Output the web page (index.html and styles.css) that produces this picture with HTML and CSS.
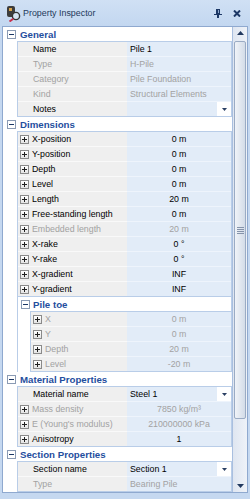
FILE: index.html
```html
<!DOCTYPE html>
<html>
<head>
<meta charset="utf-8">
<link rel="stylesheet" href="styles.css">
</head>
<body>
<div class="titlebar">
  <svg class="app-icon" viewBox="0 0 15 17">
    <rect x="1" y="1" width="8" height="11" rx="2" fill="#3d3d3d"/>
    <rect x="3" y="3" width="3" height="3" fill="#d8a44a"/>
    <circle cx="10" cy="11" r="3.6" fill="#d6e4f2" stroke="#333" stroke-width="1.4"/>
    <line x1="7.3" y1="13.8" x2="3.5" y2="16.5" stroke="#c8304e" stroke-width="2"/>
  </svg>
  <span class="title">Property Inspector</span>
  <svg class="pin" viewBox="0 0 8 9">
    <rect x="2" y="0" width="4" height="5" fill="#1c3765"/>
    <rect x="4" y="1" width="1" height="3" fill="#8fa8cc"/>
    <rect x="0" y="5" width="8" height="1" fill="#1c3765"/>
    <rect x="3" y="6" width="2" height="3" fill="#1c3765"/>
  </svg>
  <svg class="close" viewBox="0 0 8 7">
    <path d="M1 0.5 L7 6.5 M7 0.5 L1 6.5" stroke="#1c3765" stroke-width="2"/>
  </svg>
</div>
<div class="panel">
  <div class="list">
    <div class="cat"><span class="tog"><svg viewBox="0 0 9 9"><rect x="0.5" y="0.5" width="8" height="8" fill="#fff" stroke="#8b9bb4"/><path d="M2 4.5h5" stroke="#1c3765"/></svg></span><span class="cat-label">General</span></div>
    <div class="group">
      <div class="row"><div class="name np">Name</div><div class="val left">Pile 1</div></div>
      <div class="row dis"><div class="name np">Type</div><div class="val left">H-Pile</div></div>
      <div class="row dis"><div class="name np">Category</div><div class="val left">Pile Foundation</div></div>
      <div class="row dis"><div class="name np">Kind</div><div class="val left">Structural Elements</div></div>
      <div class="row last"><div class="name np">Notes</div><div class="val left"><span class="dd"><svg viewBox="0 0 5 3"><path d="M0 0h5L2.5 3z" fill="#2a3f63"/></svg></span></div></div>
    </div>

    <div class="cat"><span class="tog"><svg viewBox="0 0 9 9"><rect x="0.5" y="0.5" width="8" height="8" fill="#fff" stroke="#8b9bb4"/><path d="M2 4.5h5" stroke="#1c3765"/></svg></span><span class="cat-label">Dimensions</span></div>
    <div class="group">
      <div class="row"><div class="name"><span class="plus"></span>X-position</div><div class="val">0 m</div></div>
      <div class="row"><div class="name"><span class="plus"></span>Y-position</div><div class="val">0 m</div></div>
      <div class="row"><div class="name"><span class="plus"></span>Depth</div><div class="val">0 m</div></div>
      <div class="row"><div class="name"><span class="plus"></span>Level</div><div class="val">0 m</div></div>
      <div class="row"><div class="name"><span class="plus"></span>Length</div><div class="val">20 m</div></div>
      <div class="row"><div class="name"><span class="plus"></span>Free-standing length</div><div class="val">0 m</div></div>
      <div class="row dis"><div class="name"><span class="plus"></span>Embedded length</div><div class="val">20 m</div></div>
      <div class="row"><div class="name"><span class="plus"></span>X-rake</div><div class="val">0 °</div></div>
      <div class="row"><div class="name"><span class="plus"></span>Y-rake</div><div class="val">0 °</div></div>
      <div class="row"><div class="name"><span class="plus"></span>X-gradient</div><div class="val">INF</div></div>
      <div class="row last"><div class="name"><span class="plus"></span>Y-gradient</div><div class="val">INF</div></div>
      <div class="subcat"><span class="tog"><svg viewBox="0 0 9 9"><rect x="0.5" y="0.5" width="8" height="8" fill="#fff" stroke="#8b9bb4"/><path d="M2 4.5h5" stroke="#1c3765"/></svg></span><span class="cat-label">Pile toe</span></div>
      <div class="subgroup">
        <div class="row dis"><div class="name"><span class="plus"></span>X</div><div class="val">0 m</div></div>
        <div class="row dis"><div class="name"><span class="plus"></span>Y</div><div class="val">0 m</div></div>
        <div class="row dis"><div class="name"><span class="plus"></span>Depth</div><div class="val">20 m</div></div>
        <div class="row dis last"><div class="name"><span class="plus"></span>Level</div><div class="val">-20 m</div></div>
      </div>
    </div>

    <div class="cat"><span class="tog"><svg viewBox="0 0 9 9"><rect x="0.5" y="0.5" width="8" height="8" fill="#fff" stroke="#8b9bb4"/><path d="M2 4.5h5" stroke="#1c3765"/></svg></span><span class="cat-label">Material Properties</span></div>
    <div class="group">
      <div class="row"><div class="name np">Material name</div><div class="val left">Steel 1<span class="dd"><svg viewBox="0 0 5 3"><path d="M0 0h5L2.5 3z" fill="#2a3f63"/></svg></span></div></div>
      <div class="row dis"><div class="name"><span class="plus"></span>Mass density</div><div class="val">7850 kg/m³</div></div>
      <div class="row dis"><div class="name"><span class="plus"></span>E (Young's modulus)</div><div class="val">210000000 kPa</div></div>
      <div class="row last"><div class="name"><span class="plus"></span>Anisotropy</div><div class="val">1</div></div>
    </div>

    <div class="cat"><span class="tog"><svg viewBox="0 0 9 9"><rect x="0.5" y="0.5" width="8" height="8" fill="#fff" stroke="#8b9bb4"/><path d="M2 4.5h5" stroke="#1c3765"/></svg></span><span class="cat-label">Section Properties</span></div>
    <div class="group">
      <div class="row"><div class="name np">Section name</div><div class="val left">Section 1<span class="dd"><svg viewBox="0 0 5 3"><path d="M0 0h5L2.5 3z" fill="#2a3f63"/></svg></span></div></div>
      <div class="row dis last"><div class="name np">Type</div><div class="val left">Bearing Pile</div></div>
    </div>
  </div>
  <div class="scrollbar">
    <div class="sb-btn up"><svg viewBox="0 0 7 4"><path d="M0 4h7L3.5 0z" fill="#22395f"/></svg></div>
    <div class="sb-thumb"><svg class="grip" viewBox="0 0 7 7"><path d="M0 0.5h7M0 2.5h7M0 4.5h7M0 6.5h7" stroke="#8593aa"/></svg></div>
    <div class="sb-track"></div>
    <div class="sb-btn down"><svg viewBox="0 0 7 4"><path d="M0 0h7L3.5 4z" fill="#22395f"/></svg></div>
  </div>
</div>
</body>
</html>
```
FILE: styles.css
```css
* { box-sizing: border-box; margin: 0; padding: 0; }
html, body { width: 250px; height: 499px; overflow: hidden; }
body {
  background: #c5d8f0;
  font-family: "Liberation Sans", Arial, sans-serif;
  font-size: 8.8px;
  color: #000;
}
.titlebar {
  height: 26px;
  display: flex;
  align-items: center;
  padding-left: 6px;
  background: linear-gradient(#d0e0f4, #c3d7f0);
}
.app-icon { width: 15px; height: 17px; margin-right: 2px; flex: none; }
.title { flex: 1; font-size: 8.9px; color: #1e395b; }
.pin { width: 8px; height: 9px; flex: none; margin-right: 11px; }
.close { width: 8px; height: 7px; flex: none; margin-right: 9px; }

.panel {
  display: flex;
  margin: 0 2px;
  width: 246px;
  height: 467px;
  border: 1px solid #8fa9cf;
  background: #fff;
}
.list { width: 229px; flex: none; background: #fff; }

.cat {
  height: 14px;
  display: flex;
  align-items: center;
  padding-left: 4px;
  background: #fff;
}
.tog { width: 9px; height: 9px; display: block; margin-right: 4px; flex: none; }
.tog svg { width: 9px; height: 9px; display: block; }
.cat-label { font-weight: bold; font-size: 9.7px; color: #1f4e9e; }

.group {
  margin-left: 14px;
  border-top: 1px solid #b9cde8;
  border-left: 1px solid #b9cde8;
  border-right: 1px solid #b9cde8;
}
.subcat {
  height: 14px;
  display: flex;
  align-items: center;
  padding-left: 3px;
  background: #fff;
}
.subcat .tog { margin-right: 3px; }
.subgroup {
  margin-left: 12px;
  border-top: 1px solid #b9cde8;
  border-left: 1px solid #b9cde8;
}

.row { display: flex; height: 15px; }
.name {
  width: 109px;
  flex: none;
  display: flex;
  align-items: center;
  background: #efefef;
  border-bottom: 1px solid #f9f9f9;
  padding-left: 2px;
  white-space: nowrap;
}
.subgroup .name { width: 96px; }
.name.np { padding-left: 15px; }
.plus {
  width: 9px;
  height: 9px;
  margin-right: 3px;
  flex: none;
  border: 1px solid #8a8a8a;
  background: linear-gradient(#ffffff, #e4e4e4);
  position: relative;
}
.plus::before, .plus::after {
  content: "";
  position: absolute;
  background: #1f1f1f;
}
.plus::before { left: 1px; top: 3px; width: 5px; height: 1px; }
.plus::after { left: 3px; top: 1px; width: 1px; height: 5px; }

.val {
  flex: 1;
  display: flex;
  align-items: center;
  justify-content: center;
  background: #e2ecf8;
  border-bottom: 1px solid #eef4fc;
  white-space: nowrap;
}
.val.left { justify-content: flex-start; padding-left: 3px; }
.dd {
  margin-left: auto;
  width: 14px;
  height: 14px;
  background: #fff;
  display: flex;
  align-items: center;
  justify-content: center;
  flex: none;
}
.dd svg { width: 5px; height: 3px; display: block; }

.row.last .name, .row.last .val { border-bottom-color: #b9cde8; }
.dis .name, .dis .val { color: #a2a2a2; }

.scrollbar {
  width: 15px;
  flex: none;
  display: flex;
  flex-direction: column;
  background: linear-gradient(90deg, #dfe6f1, #eef2f8);
  border-left: 1px solid #a9bfdf;
}
.sb-btn {
  height: 12px;
  display: flex;
  align-items: center;
  justify-content: center;
  flex: none;
}
.sb-btn svg { width: 7px; height: 4px; display: block; }
.sb-btn.up { margin-bottom: 2px; }
.sb-thumb {
  height: 378px;
  margin: 0 1px;
  border: 1px solid #9aabc4;
  border-radius: 2px;
  background: linear-gradient(90deg, #f0f3f8, #d3dce8);
  display: flex;
  align-items: center;
  justify-content: center;
  flex: none;
}
.grip { width: 7px; height: 7px; display: block; }
.sb-track { flex: 1; }
```
